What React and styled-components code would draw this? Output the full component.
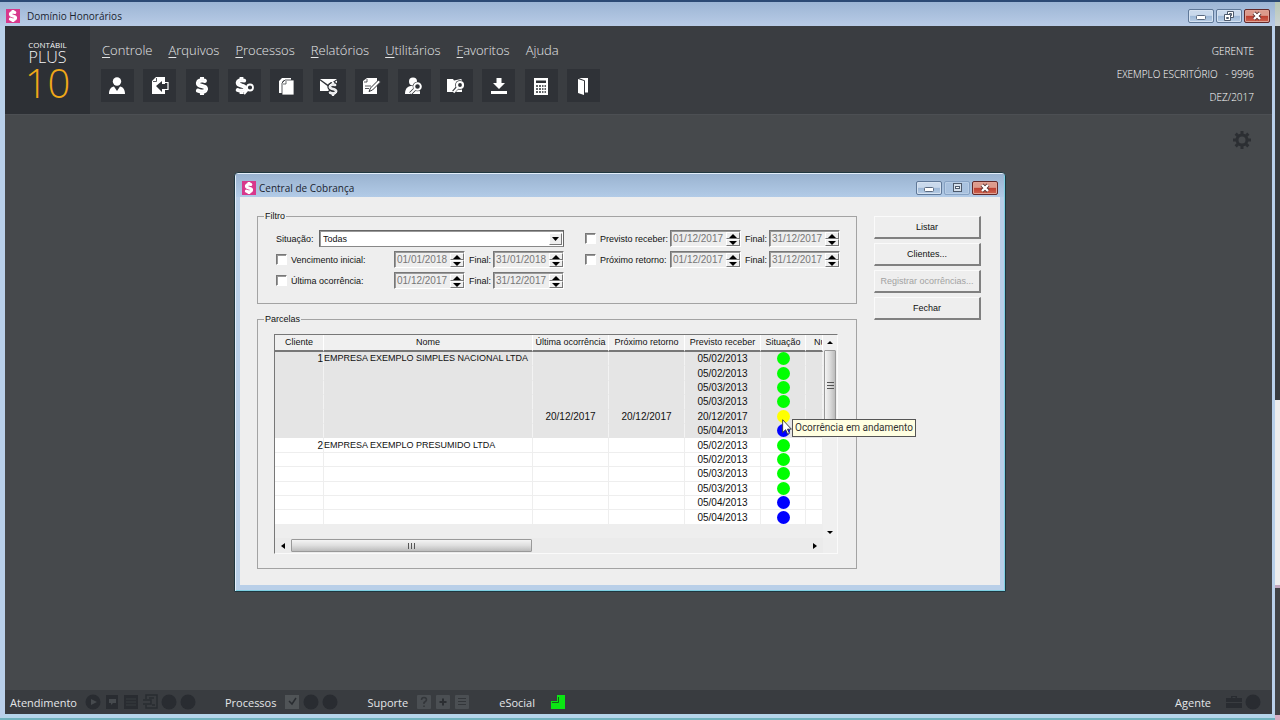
import styled, { createGlobalStyle, css } from "styled-components";
import { FaDollarSign } from "react-icons/fa6";

const menus = [
  { first: "C", rest: "ontrole" },
  { first: "A", rest: "rquivos" },
  { first: "P", rest: "rocessos" },
  { first: "R", rest: "elatórios" },
  { first: "U", rest: "tilitários" },
  { first: "F", rest: "avoritos" },
  { before: "A", first: "j", rest: "uda" },
];

const empty = ["", ""];
const parcelas = [
  ["1", "EMPRESA EXEMPLO SIMPLES NACIONAL LTDA", ...empty, "05/02/2013", "lime"],
  ["", "", ...empty, "05/02/2013", "lime"],
  ["", "", ...empty, "05/03/2013", "lime"],
  ["", "", ...empty, "05/03/2013", "lime"],
  ["", "", "20/12/2017", "20/12/2017", "20/12/2017", "yellow"],
  ["", "", ...empty, "05/04/2013", "blue"],
  ["2", "EMPRESA EXEMPLO PRESUMIDO LTDA", ...empty, "05/02/2013", "lime"],
  ["", "", ...empty, "05/02/2013", "lime"],
  ["", "", ...empty, "05/03/2013", "lime"],
  ["", "", ...empty, "05/03/2013", "lime"],
  ["", "", ...empty, "05/04/2013", "blue"],
  ["", "", ...empty, "05/04/2013", "blue"],
];

const situacoes = { lime: "Em dia", yellow: "Ocorrência em andamento", blue: "A vencer" };

const dark = "#2d3035";

const tools = [
  {
    label: "Clientes",
    art: (
      <>
        <circle cx="9" cy="5.500" r="4.200" />
        <path d="M1 18c0-5 2-7 5-7.600L9 15l3-4.600c3 .6 5 2.600 5 7.600z" />
      </>
    ),
  },
  {
    label: "Importar",
    art: (
      <>
        <path d="M2 5l4-4h9v17H2z" />
        <path d="M3 5.500h3.500V2" fill="none" stroke={dark} strokeWidth=".8" />
        <path d="M6 10l6-5v3h6v5h-6v3z" fill={dark} />
        <path d="M14.500 6.500H18v7h-4" fill="none" stroke="#fff" strokeWidth="1.200" />
      </>
    ),
  },
  { label: "Honorários", art: <FaDollarSign x="1" y="1" size={18} stroke="#fff" strokeWidth="55" /> },
  {
    label: "Consultar honorários",
    art: (
      <>
        <FaDollarSign x="-2" y="1" size={17} stroke="#fff" strokeWidth="55" />
        <circle cx="15" cy="11.500" r="3" fill={dark} stroke="#fff" strokeWidth="1.800" />
        <path d="M12.500 14l-3.500 4" stroke="#fff" strokeWidth="2" />
      </>
    ),
  },
  {
    label: "Documentos",
    art: (
      <>
        <path d="M2 5l3-3h9v2H7L5 6v11H2z" />
        <path d="M5 7l3-3h9v15H5z" stroke={dark} strokeWidth=".8" />
        <path d="M6 8h3V5" fill="none" stroke={dark} strokeWidth=".7" />
      </>
    ),
  },
  {
    label: "Enviar cobrança",
    art: (
      <>
        <path d="M1 3h17l-8.500 6zM1 4.500l8 6 9-6V8l-6 2v5H1z" />
        <FaDollarSign x="7" y="6" size={14} stroke={dark} strokeWidth="120" paintOrder="stroke" />
        <FaDollarSign x="7" y="6" size={14} stroke="#fff" strokeWidth="30" />
      </>
    ),
  },
  {
    label: "Editar",
    art: (
      <>
        <path d="M1 5l4-3h10v16H1z" />
        <path d="M3 10h6M3 12.500h4M2 6h3V3" stroke={dark} strokeWidth=".8" fill="none" />
        <path d="M7 15.500l1.500-3.500 8-8 2 2-8 8z" stroke={dark} strokeWidth="1" />
      </>
    ),
  },
  {
    label: "Localizar cliente",
    art: (
      <>
        <circle cx="9" cy="5.500" r="4" />
        <path d="M1 18c0-5 2-7.500 6-8h4c4 .5 5 3 5 8z" />
        <circle cx="13.500" cy="10.500" r="4.800" fill={dark} />
        <path d="M10.500 13.500l-4 4" stroke={dark} strokeWidth="3.500" />
        <circle cx="13.500" cy="10.500" r="3.300" fill={dark} stroke="#fff" strokeWidth="2" />
        <path d="M11 13l-4.500 4.500" stroke="#fff" strokeWidth="2" />
      </>
    ),
  },
  {
    label: "Localizar pasta",
    art: (
      <>
        <path d="M1 3h6l1 1.500 7-1.500 1 1v12H1z" />
        <circle cx="14" cy="9" r="4.800" fill={dark} />
        <path d="M11.500 11.500l-4 4.500" stroke={dark} strokeWidth="3.500" />
        <circle cx="14" cy="9" r="3" fill={dark} stroke="#fff" strokeWidth="2.200" />
        <path d="M12 11.500l-4.500 5" stroke="#fff" strokeWidth="2" />
      </>
    ),
  },
  {
    label: "Baixar",
    art: <path d="M7.500 2h5v5H16l-6 6-6-6h3.500zM2 15h16v3H2z" />,
  },
  {
    label: "Calculadora",
    art: (
      <>
        <path d="M3 2h14v17H3z" />
        <path d="M5 4.500h10V7H5z" fill={dark} />
        <path
          d="M5 10h2m1 0h2m1 0h1.500m1 0H15M5 13h2m1 0h2m1 0h1.500m1 0H15M5 16h2m1 0h2m1 0h1.500m1 0H15"
          stroke={dark}
          strokeWidth="1.500"
        />
      </>
    ),
  },
  {
    label: "Sair",
    art: (
      <>
        <path d="M5 3l6 2v14l-6-2z" />
        <path d="M6 2h9v14.500h-3V4.500z" />
      </>
    ),
  },
];

const SystemIcon = () => (
  <svg width="14" height="14" viewBox="0 0 14 14" aria-hidden="true">
    <rect width="14" height="14" fill="#d8388c" />
    <FaDollarSign x="1" y="1" size={12} color="#fff" stroke="#fff" strokeWidth="60" />
  </svg>
);

const GearIcon = () => (
  <svg width="18" height="18" viewBox="0 0 18 18" fill="none" stroke="#2c2f33" aria-hidden="true">
    <circle cx="9" cy="9" r="5" strokeWidth="3" />
    <path
      d="M9 0v4M9 14v4M0 9h4M14 9h4M2.640 2.640l2.500 2.500M12.860 12.860l2.500 2.500M2.640 15.360l2.500-2.500M12.860 5.140l2.500-2.500"
      strokeWidth="3"
    />
  </svg>
);

const WindowControls = ({ middle, muted }) => (
  <ControlGroup>
    <ControlButton aria-label="Minimizar">
      <svg width="14" height="12" viewBox="0 0 14 12">
        <rect x="2.500" y="5.500" width="9" height="4" rx="1" fill="#fff" stroke="#5a6a80" />
      </svg>
    </ControlButton>
    <ControlButton aria-label={middle} $muted={muted}>
      <svg width="14" height="12" viewBox="0 0 14 12" fill="#fff" stroke="#4d5a6c">
        {muted ? (
          <>
            <rect x="3.500" y="1.500" width="8" height="8" fill="#d5e0ec" />
            <rect x="5.500" y="4.500" width="4" height="2" />
          </>
        ) : (
          <>
            <path d="M5.500 1.500h6v6h-6zM7.500 3.500h2v2h-2z" />
            <path d="M2.500 4.500h6v6h-6zM4.500 7.500h2v1h-2z" />
          </>
        )}
      </svg>
    </ControlButton>
    <ControlButton aria-label="Fechar janela" $close>
      <svg width="14" height="12" viewBox="0 0 14 12">
        <path d="M4 3l6 6M10 3l-6 6" stroke="#59302f" strokeWidth="4" />
        <path d="M4 3l6 6M10 3l-6 6" stroke="#fff" strokeWidth="2.400" />
      </svg>
    </ControlButton>
  </ControlGroup>
);

const DateField = ({ label, value }) => (
  <SpinBox>
    <DateInput aria-label={label} defaultValue={value} disabled />
    <SpinButtons>
      <SpinButton aria-label={`${label}: aumentar`} disabled>
        <svg width="8" height="4" viewBox="0 0 8 4"><path d="M0 4l4-4 4 4z" /></svg>
      </SpinButton>
      <SpinButton aria-label={`${label}: diminuir`} disabled>
        <svg width="8" height="4" viewBox="0 0 8 4"><path d="M0 0l4 4 4-4z" /></svg>
      </SpinButton>
    </SpinButtons>
  </SpinBox>
);

const DateFilter = ({ id, label, from, to, narrow }) => (
  <FilterRow $narrow={narrow}>
    <CheckBox id={id} type="checkbox" />
    <label htmlFor={id}>{label}</label>
    <DateField label={`${label} de`} value={from} />
    <span>Final:</span>
    <DateField label={`${label} até`} value={to} />
  </FilterRow>
);

const StatusIcon = ({ kind }) => (
  <svg width="16" height="16" viewBox="0 0 16 16" fill="#292c31" aria-hidden="true">
    {kind === "dot" && <circle cx="8" cy="8" r="7.500" />}
    {kind === "play" && (
      <>
        <circle cx="8" cy="8" r="7.500" />
        <path d="M6 5l6 3-6 3z" fill="#464a4e" />
      </>
    )}
    {kind === "chat" && (
      <>
        <path d="M2 1h12v14H2z" />
        <path d="M5 5h7v4H9l-2 2V9H5z" fill="#464a4e" />
      </>
    )}
    {kind === "list" && (
      <>
        <path d="M1 1h14v14H1z" />
        <path d="M3 5h10M3 8h10M3 11h10" stroke="#393d41" />
      </>
    )}
    {kind === "sheet" && (
      <g fill="none" stroke="#292c31" strokeWidth="1.500">
        <path d="M4 5V1h11v13H4v-3M1 6h8v4H1M7 4h5M10 11h3" />
      </g>
    )}
    {kind === "check" && (
      <>
        <path d="M1 1h14v14H1z" fill="#505457" />
        <path d="M5 7l3 3 4-6" fill="none" stroke="#292c31" strokeWidth="1.500" />
      </>
    )}
    {["help", "plus", "lines"].includes(kind) && <rect x="1" y="1" width="14" height="14" rx="1" fill="#4b4f53" />}
    {kind === "help" && <path d="M5.500 6q0-2.500 2.500-2.500T10.500 6Q10 7.500 8 8.500V10M8 11.500v1.500" fill="none" stroke="#33363a" strokeWidth="1.500" />}
    {kind === "plus" && <path d="M8 4.500v7M4.500 8h7" stroke="#2b2e32" strokeWidth="2" />}
    {kind === "lines" && <path d="M4 4.500h8M4 7.500h8M4 10.500h8" stroke="#33363a" strokeWidth="1.200" />}
    {kind === "case" && (
      <>
        <path d="M5 4V2h6v2h5v4H0V4zM0 9h16v5H0z" />
        <path d="M6.500 4h3V3h-3z" fill="#393d41" />
      </>
    )}
    {kind === "social" && (
      <>
        <path d="M7 1h8v14H1V7h6z" fill="#0be613" />
        <path d="M2 8.500h6.500V3" fill="none" stroke="#14641b" />
      </>
    )}
  </svg>
);

const StatusItem = ({ label, icons, spaced }) => (
  <StatusGroup $spaced={spaced}>
    <span>{label}</span>
    <StatusIcons>
      {icons.map((kind, i) => <StatusIcon key={i} kind={kind} />)}
    </StatusIcons>
  </StatusGroup>
);

const Parcelas = () => (
  <Table>
    <colgroup>
      <col style={{ width: 49 }} />
      <col style={{ width: 209 }} />
      <col style={{ width: 76 }} />
      <col style={{ width: 76 }} />
      <col style={{ width: 76 }} />
      <col style={{ width: 45 }} />
      <col />
    </colgroup>
    <thead>
      <tr>
        <th>Cliente</th>
        <th>Nome</th>
        <th>Última ocorrência</th>
        <th>Próximo retorno</th>
        <th>Previsto receber</th>
        <th>Situação</th>
        <ClippedTh>Número</ClippedTh>
      </tr>
    </thead>
    <tbody>
      {parcelas.map(([cliente, nome, ultima, retorno, previsto, cor], i) => (
        <Row key={i} $shaded={i < 6}>
          <NumberCell>{cliente}</NumberCell>
          <NameCell>{nome}</NameCell>
          <td>{ultima}</td>
          <td>{retorno}</td>
          <td>{previsto}</td>
          <td><Dot $color={cor} role="img" aria-label={situacoes[cor]} /></td>
          <td />
        </Row>
      ))}
    </tbody>
  </Table>
);

const CentralCobranca = () => (
  <Dialog role="dialog" aria-labelledby="central">
    <DialogTitleBar>
      <SystemIcon />
      <Title id="central">Central de Cobrança</Title>
      <WindowControls middle="Maximizar" muted />
    </DialogTitleBar>
    <DialogBody>
      <Panels>
        <Group>
          <legend>Filtro</legend>
          <Filters>
            <FilterColumn>
              <SelectRow>
                <label htmlFor="situacao">Situação:</label>
                <SelectBox>
                  <select id="situacao" defaultValue="Todas">
                    <option>Todas</option>
                  </select>
                  <SelectArrow aria-hidden="true">
                    <svg width="7" height="4" viewBox="0 0 7 4"><path d="M0 0h7L3.500 4z" /></svg>
                  </SelectArrow>
                </SelectBox>
              </SelectRow>
              <DateFilter id="vencimento" label="Vencimento inicial:" from="01/01/2018" to="31/01/2018" />
              <DateFilter id="ultima" label="Última ocorrência:" from="01/12/2017" to="31/12/2017" />
            </FilterColumn>
            <FilterColumn>
              <DateFilter id="previsto" label="Previsto receber:" from="01/12/2017" to="31/12/2017" narrow />
              <DateFilter id="retorno" label="Próximo retorno:" from="01/12/2017" to="31/12/2017" narrow />
            </FilterColumn>
          </Filters>
        </Group>
        <Group>
          <legend>Parcelas</legend>
          <Grid>
            <TableArea><Parcelas /></TableArea>
            <VerticalBar>
              <svg width="6" height="3" viewBox="0 0 6 3"><path d="M0 3l3-3 3 3z" /></svg>
              <VerticalThumb>
                <svg width="7" height="7" viewBox="0 0 7 7"><path d="M0 .5h7M0 3.500h7M0 6.500h7" stroke="#555" /></svg>
              </VerticalThumb>
              <svg width="6" height="3" viewBox="0 0 6 3"><path d="M0 0l3 3 3-3z" /></svg>
            </VerticalBar>
            <HorizontalBar>
              <svg width="4" height="6" viewBox="0 0 4 6"><path d="M4 0L0 3l4 3z" /></svg>
              <HorizontalThumb>
                <svg width="7" height="6" viewBox="0 0 7 6"><path d="M.5 0v6M3.500 0v6M6.500 0v6" stroke="#555" /></svg>
              </HorizontalThumb>
              <svg width="4" height="6" viewBox="0 0 4 6"><path d="M0 0l4 3-4 3z" /></svg>
            </HorizontalBar>
          </Grid>
        </Group>
      </Panels>
      <Actions>
        <ActionButton>Listar</ActionButton>
        <ActionButton>Clientes...</ActionButton>
        <ActionButton disabled>Registrar ocorrências...</ActionButton>
        <ActionButton>Fechar</ActionButton>
      </Actions>
    </DialogBody>
    <Hint>
      <svg width="10" height="18" viewBox="0 0 11 18">
        <path d="M.7 1v14l3.300-3 2.200 5 2-1-2.200-4.600h4.300z" fill="#fff" stroke="#333" />
      </svg>
      <Tooltip role="tooltip">Ocorrência em andamento</Tooltip>
    </Hint>
  </Dialog>
);

export default function App() {
  return (
    <Desktop>
      <GlobalStyle />
      <MainWindow>
        <TitleBar>
          <SystemIcon />
          <Title>Domínio Honorários</Title>
          <WindowControls middle="Restaurar" />
        </TitleBar>
        <Header>
          <Logo>
            <LogoTop>CONTÁBIL</LogoTop>
            <LogoPlus>PLUS</LogoPlus>
            <LogoTen>10</LogoTen>
          </Logo>
          <Navigation>
            <Menu>
              {menus.map((m) => (
                <MenuButton key={m.rest}>{m.before}<u>{m.first}</u>{m.rest}</MenuButton>
              ))}
            </Menu>
            <Toolbar>
              {tools.map((t) => (
                <ToolButton key={t.label} aria-label={t.label}>
                  <svg width="20" height="20" viewBox="0 0 20 20" fill="#fff">{t.art}</svg>
                </ToolButton>
              ))}
            </Toolbar>
          </Navigation>
          <Session>
            <span>GERENTE</span>
            <span>EXEMPLO ESCRITÓRIO &nbsp;&nbsp;- 9996</span>
            <span>DEZ/2017</span>
          </Session>
        </Header>
        <Workspace>
          <SettingsButton aria-label="Configurações"><GearIcon /></SettingsButton>
          <CentralCobranca />
        </Workspace>
        <StatusBar>
          <StatusItem label="Atendimento" icons={["play", "chat", "list", "sheet", "dot", "dot"]} />
          <StatusItem label="Processos" icons={["check", "dot", "dot"]} />
          <StatusItem label="Suporte" icons={["help", "plus", "lines"]} />
          <StatusItem label="eSocial" icons={["social"]} spaced />
          <Spacer />
          <StatusItem label="Agente" icons={["case", "dot"]} spaced />
        </StatusBar>
      </MainWindow>
      <Behind>
        <BehindTop />
        <BehindDark />
        <BehindLight />
        <BehindLower />
      </Behind>
    </Desktop>
  );
}

const GlobalStyle = createGlobalStyle`
  * {
    box-sizing: border-box;
  }
  body {
    margin: 0;
    font-family: "Open Sans", "Noto Sans", sans-serif;
  }
  svg {
    display: block;
    flex: none;
  }
  button, input, select {
    font: inherit;
    color: inherit;
    padding: 0;
    margin: 0;
  }
`;

const Desktop = styled.div`
  display: grid;
  grid-template-columns: 1fr 5px;
  height: 100vh;
  min-height: 640px;
  overflow: hidden;
`;

const MainWindow = styled.div`
  display: flex;
  flex-direction: column;
  min-width: 0;
  border: solid #b9d0ea;
  border-width: 0 3px 4px 5px;
  border-bottom-color: #b5d5ea;
  margin-bottom: 2px;
  box-shadow: 0 2px 0 #6fb2bd;
`;

const TitleBar = styled.div`
  display: flex;
  align-items: center;
  gap: 7px;
  flex: none;
  height: 26px;
  margin: 0 -3px 0 -5px;
  padding: 4px 5px 0 6px;
  border-top: 2px solid #2c4a74;
  background: linear-gradient(#9cb5d4, #b8cbe6);
`;

const Title = styled.h1`
  flex: 1;
  margin: 0;
  font-size: 10px;
  font-weight: 400;
  line-height: 14px;
  color: #1b2430;
`;

const ControlGroup = styled.div`
  display: flex;
  gap: 2px;
`;

const ControlButton = styled.button`
  display: flex;
  align-items: center;
  justify-content: center;
  width: 26px;
  height: 14px;
  border: 1px solid #5f7898;
  border-radius: 2px;
  background: linear-gradient(#c9d9ec 45%, #9cb7d6 50%, #b8cde5);
  box-shadow: inset 0 0 0 1px #d5e2f1;
  ${({ $muted }) => $muted && css`
    border-color: #87a2c3;
    background: #a9c2df;
    box-shadow: inset 0 0 0 1px #b9cee6;
  `}
  ${({ $close }) => $close && css`
    border-color: #63292a;
    background: linear-gradient(#dc9a8c 45%, #bd3e30 50%, #cd6450);
    box-shadow: inset 0 0 0 1px #e0a295;
  `}
`;

const Header = styled.header`
  display: flex;
  flex: none;
  height: 88px;
  background: #3a3d41;
  color: #e4e6e8;
  font-weight: 300;
`;

const Logo = styled.div`
  display: flex;
  flex-direction: column;
  align-items: center;
  width: 85px;
  padding-top: 13px;
  background: #2d3035;
  color: #f4f5f6;
`;

const LogoTop = styled.span`
  font-size: 8px;
  font-weight: 400;
  line-height: 12px;
`;

const LogoPlus = styled.span`
  font-size: 16px;
  line-height: 12px;
`;

const LogoTen = styled.span`
  font-size: 40px;
  line-height: 40px;
  color: #f0a818;
`;

const Navigation = styled.nav`
  flex: 1;
  padding: 14px 0 0 11px;
`;

const Menu = styled.div`
  display: flex;
  gap: 16px;
  padding-left: 1px;
`;

const MenuButton = styled.button`
  border: 0;
  background: none;
  font-size: 13px;
  line-height: 20px;
  u {
    text-underline-offset: 2px;
  }
`;

const Toolbar = styled.div`
  display: flex;
  justify-content: space-between;
  width: 499px;
  padding-top: 9px;
`;

const ToolButton = styled.button`
  display: flex;
  align-items: center;
  justify-content: center;
  width: 33px;
  height: 33px;
  border: 0;
  background: #2f3237;
`;

const Session = styled.div`
  display: flex;
  flex-direction: column;
  align-items: flex-end;
  padding: 14px 18px 0 0;
  font-size: 10px;
  line-height: 23px;
  color: #fff;
`;

const Workspace = styled.main`
  position: relative;
  flex: 1;
  min-height: 0;
  background: #46494c;
  border-top: 1px solid #4c4f53;
`;

const SettingsButton = styled.button`
  display: block;
  margin: 16px 21px 0 auto;
  border: 0;
  background: none;
`;

const StatusBar = styled.footer`
  display: flex;
  align-items: center;
  flex: none;
  gap: 29px;
  height: 24px;
  padding: 0 11px 0 5px;
  background: #393c40;
  color: #e4e6e8;
  font-size: 11px;
`;

const StatusGroup = styled.div`
  display: flex;
  align-items: center;
  gap: ${({ $spaced }) => ($spaced ? "15px" : "8px")};
`;

const StatusIcons = styled.div`
  display: flex;
  gap: 3px;
`;

const Spacer = styled.div`
  flex: 1;
`;

const Behind = styled.div`
  display: flex;
  flex-direction: column;
`;

const BehindTop = styled.div`
  height: 26px;
  border-top: 2px solid #2c4a74;
  background: linear-gradient(#b8c7b5, #cbd3d5);
`;

const BehindDark = styled.div`
  height: 374px;
  background: #393c3f;
`;

const BehindLight = styled.div`
  height: 188px;
  background: #eee;
  border-bottom: 3px solid #c3a9c0;
`;

const BehindLower = styled.div`
  flex: 1;
  background: #414346;
  border-bottom: 5px solid #d6aec3;
`;

const Dialog = styled.section`
  position: absolute;
  left: 229px;
  top: 57px;
  display: flex;
  flex-direction: column;
  width: 772px;
  border: 1px solid #20373f;
  border-radius: 4px 4px 0 0;
  background: #b9cfe8;
  padding: 0 5px 6px;
  box-shadow: inset 1px 1px 0 #e3eefa, inset -1px -1px 0 #7ed0e2;
`;

const DialogTitleBar = styled.div`
  display: flex;
  align-items: center;
  gap: 3px;
  height: 23px;
  margin: 1px -4px 0;
  padding: 5px 6px 0;
  background: linear-gradient(#9ab3d0, #b2cbe7);
`;

const DialogBody = styled.div`
  display: grid;
  grid-template-columns: 1fr 107px;
  column-gap: 17px;
  padding: 12px 19px 16px 17px;
  background: #eee;
  color: #111;
  font-family: "Liberation Sans", sans-serif;
  font-size: 9px;
  line-height: 14px;
  white-space: nowrap;
`;

const Panels = styled.div`
  display: flex;
  flex-direction: column;
  gap: 8px;
  min-width: 0;
`;

const Group = styled.fieldset`
  min-width: 0;
  margin: 0;
  padding: 7px 17px 14px;
  border: 1px solid #a3a3a3;
  legend {
    margin-left: -11px;
    padding: 0 1px;
  }
`;

const Filters = styled.div`
  display: flex;
  gap: 21px;
  padding-left: 1px;
`;

const FilterColumn = styled.div`
  display: flex;
  flex-direction: column;
  gap: 4px;
`;

const FilterRow = styled.div`
  display: grid;
  grid-template-columns: 15px ${({ $narrow }) => ($narrow ? "70px" : "103px")} 71px 28px 71px;
  align-items: center;
  height: 17px;
  span {
    padding-left: 4px;
  }
`;

const SelectRow = styled.div`
  display: grid;
  grid-template-columns: 1fr 245px;
  align-items: center;
  height: 17px;
`;

const sunken = css`
  border: 1px solid;
  border-color: #777 #fff #fff #777;
  box-shadow: inset 1px 1px 0 #999;
`;

const CheckBox = styled.input`
  appearance: none;
  width: 11px;
  height: 11px;
  background: #fff;
  ${sunken}
`;

const SelectBox = styled.div`
  display: flex;
  height: 17px;
  padding: 2px 1px 1px 2px;
  background: #fff;
  ${sunken}
  border-color: #666 #666 #888 #666;
  select {
    flex: 1;
    appearance: none;
    border: 0;
    outline: 0;
    background: none;
    line-height: 12px;
    padding-left: 1px;
  }
`;

const raised = css`
  border: 1px solid;
  border-color: #fff #777 #777 #fff;
  background: #eee;
`;

const SelectArrow = styled.span`
  display: flex;
  align-items: center;
  justify-content: center;
  width: 13px;
  ${raised}
`;

const SpinBox = styled.div`
  display: flex;
  height: 17px;
  padding: 1px 0 0 2px;
  ${sunken}
`;

const DateInput = styled.input`
  flex: 1;
  min-width: 0;
  border: 0;
  background: none;
  color: #777;
  font-size: 10px;
`;

const SpinButtons = styled.div`
  display: grid;
  grid-template-rows: 1fr 1fr;
  width: 14px;
`;

const SpinButton = styled.button`
  display: flex;
  align-items: center;
  justify-content: center;
  min-height: 0;
  ${raised}
`;

const Grid = styled.div`
  display: grid;
  grid-template: 203px 15px / 1fr 14px;
  border: 1px solid;
  border-color: #777 #fafafa #fafafa #777;
  box-shadow: inset 0 1px 0 #999;
  margin: 1px 1px 0 -1px;
`;

const TableArea = styled.div`
  overflow: hidden;
`;

const Table = styled.table`
  width: 100%;
  height: 190px;
  table-layout: fixed;
  border-collapse: separate;
  border-spacing: 0;
  line-height: 13px;
  th, td {
    padding: 0;
    text-align: center;
    white-space: nowrap;
    overflow: hidden;
  }
  th {
    height: 17px;
    font-weight: 400;
    background: #f0f0f0;
    border-right: 1px solid #fff;
    border-bottom: 2px solid #777;
  }
  td {
    font-size: 10px;
  }
`;

const ClippedTh = styled.th`
  && {
    text-align: left;
    padding-left: 8px;
  }
`;

const Row = styled.tr`
  background: ${({ $shaded }) => ($shaded ? "#e5e5e5" : "#fff")};
  td {
    border-right: 1px solid ${({ $shaded }) => ($shaded ? "#f3f3f3" : "#eee")};
    border-bottom: 1px solid ${({ $shaded }) => ($shaded ? "#e5e5e5" : "#eee")};
  }
`;

const NumberCell = styled.td`
  && {
    text-align: right;
  }
`;

const NameCell = styled.td`
  && {
    text-align: left;
    font-size: 9px;
  }
`;

const Dot = styled.span`
  display: block;
  width: 13px;
  height: 13px;
  margin: 0 auto;
  border-radius: 50%;
  background: ${({ $color }) => $color};
`;

const VerticalBar = styled.div`
  display: flex;
  flex-direction: column;
  align-items: center;
  padding: 6px 0 4px;
  background: #f0f0f0;
  > svg:last-child {
    margin-top: auto;
  }
`;

const thumb = css`
  display: flex;
  align-items: center;
  justify-content: center;
  border: 1px solid #999;
  border-radius: 1px;
`;

const VerticalThumb = styled.div`
  ${thumb}
  width: 12px;
  height: 71px;
  margin-top: 6px;
  background: linear-gradient(90deg, #f4f4f4, #dcdcdc 50%, #bbb);
`;

const HorizontalBar = styled.div`
  display: flex;
  align-items: center;
  padding: 0 6px;
  background: #ebebeb;
  > svg:last-child {
    margin-left: auto;
  }
`;

const HorizontalThumb = styled.div`
  ${thumb}
  width: 241px;
  height: 13px;
  margin-left: 6px;
  background: linear-gradient(#f4f4f4, #dedede 50%, #bcbcbc);
`;

const Actions = styled.div`
  display: flex;
  flex-direction: column;
  gap: 4px;
  padding-top: 7px;
`;

const ActionButton = styled.button`
  height: 23px;
  border: solid;
  border-width: 1px 2px 2px 1px;
  border-color: #fafafa #808080 #808080 #fafafa;
  background: #eee;
  &:disabled {
    color: #a2a2a2;
  }
`;

const Hint = styled.div`
  position: absolute;
  left: 547px;
  top: 245px;
  display: flex;
`;

const Tooltip = styled.div`
  height: 18px;
  margin-top: 1px;
  padding: 0 2px;
  border: 1px solid #555;
  background: #ffffe1;
  color: #333;
  font-family: Roboto, sans-serif;
  font-size: 10px;
  line-height: 16px;
`;
